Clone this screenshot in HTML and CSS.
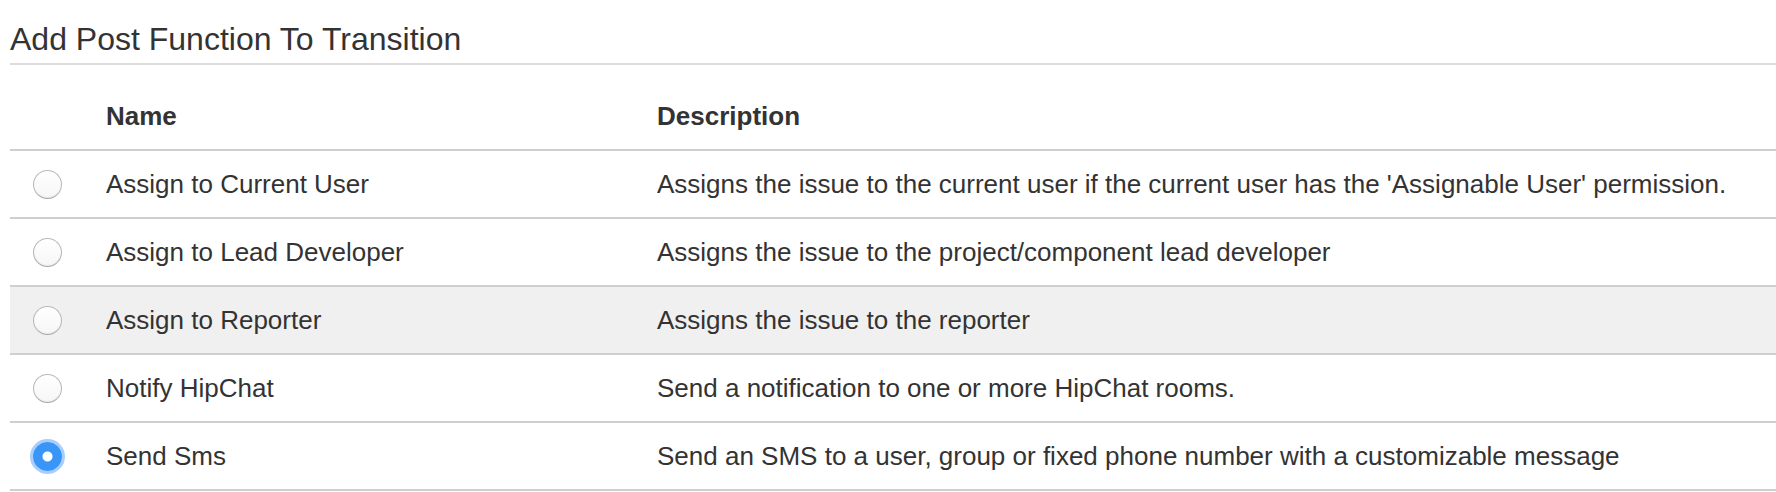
FILE: index.html
```html
<!DOCTYPE html>
<html>
<head>
<meta charset="utf-8">
<link rel="stylesheet" href="styles.css">
</head>
<body>
<div class="page">
  <h2 class="title">Add Post Function To Transition</h2>
  <div class="table">
    <div class="row head">
      <div class="cell sel"></div>
      <div class="cell">Name</div>
      <div class="cell">Description</div>
    </div>
    <div class="row">
      <div class="cell sel"><input type="radio" name="pf" class="radio"></div>
      <div class="cell">Assign to Current User</div>
      <div class="cell">Assigns the issue to the current user if the current user has the 'Assignable User' permission.</div>
    </div>
    <div class="row">
      <div class="cell sel"><input type="radio" name="pf" class="radio"></div>
      <div class="cell">Assign to Lead Developer</div>
      <div class="cell">Assigns the issue to the project/component lead developer</div>
    </div>
    <div class="row hover">
      <div class="cell sel"><input type="radio" name="pf" class="radio"></div>
      <div class="cell">Assign to Reporter</div>
      <div class="cell">Assigns the issue to the reporter</div>
    </div>
    <div class="row">
      <div class="cell sel"><input type="radio" name="pf" class="radio"></div>
      <div class="cell">Notify HipChat</div>
      <div class="cell">Send a notification to one or more HipChat rooms.</div>
    </div>
    <div class="row">
      <div class="cell sel"><input type="radio" name="pf" class="radio" checked></div>
      <div class="cell">Send Sms</div>
      <div class="cell">Send an SMS to a user, group or fixed phone number with a customizable message</div>
    </div>
  </div>
</div>
</body>
</html>
```

FILE: styles.css
```css
html, body {
  margin: 0;
  padding: 0;
  background: #fff;
}
body {
  font-family: "Liberation Sans", Arial, Helvetica, sans-serif;
  color: #333;
}
.page {
  padding-left: 10px;
}
.title {
  margin: 0;
  padding-top: 21px;
  padding-bottom: 6px;
  font-size: 32px;
  line-height: 36px;
  font-weight: normal;
  color: #333;
  border-bottom: 2px solid #dcdcdc;
}
.table {
  margin-top: 18px;
}
.row {
  display: grid;
  grid-template-columns: 96px 551px 1fr;
  height: 66px;
  align-items: center;
  border-bottom: 2px solid #cfcfcf;
  font-size: 26px;
}
.row.head {
  font-weight: bold;
}
.row.hover {
  background: #f0f0f0;
}
.cell {
  white-space: nowrap;
}
.sel {
  padding-left: 23px;
  display: flex;
  align-items: center;
}
.radio {
  -webkit-appearance: none;
  appearance: none;
  margin: 0;
  width: 29px;
  height: 29px;
  border-radius: 50%;
  border: 1px solid #b9b9b9;
  border-bottom-color: #a9a9a9;
  background: linear-gradient(#ffffff, #f6f6f6);
  box-shadow: inset 0 -1px 1px rgba(0,0,0,0.06);
  box-sizing: border-box;
}
.radio:checked {
  border: none;
  background: radial-gradient(circle, #ffffff 0, #ffffff 4.5px, #3a95f9 5.5px);
  box-shadow: 0 0 0 3px rgba(120, 180, 250, 0.65);
}
```
